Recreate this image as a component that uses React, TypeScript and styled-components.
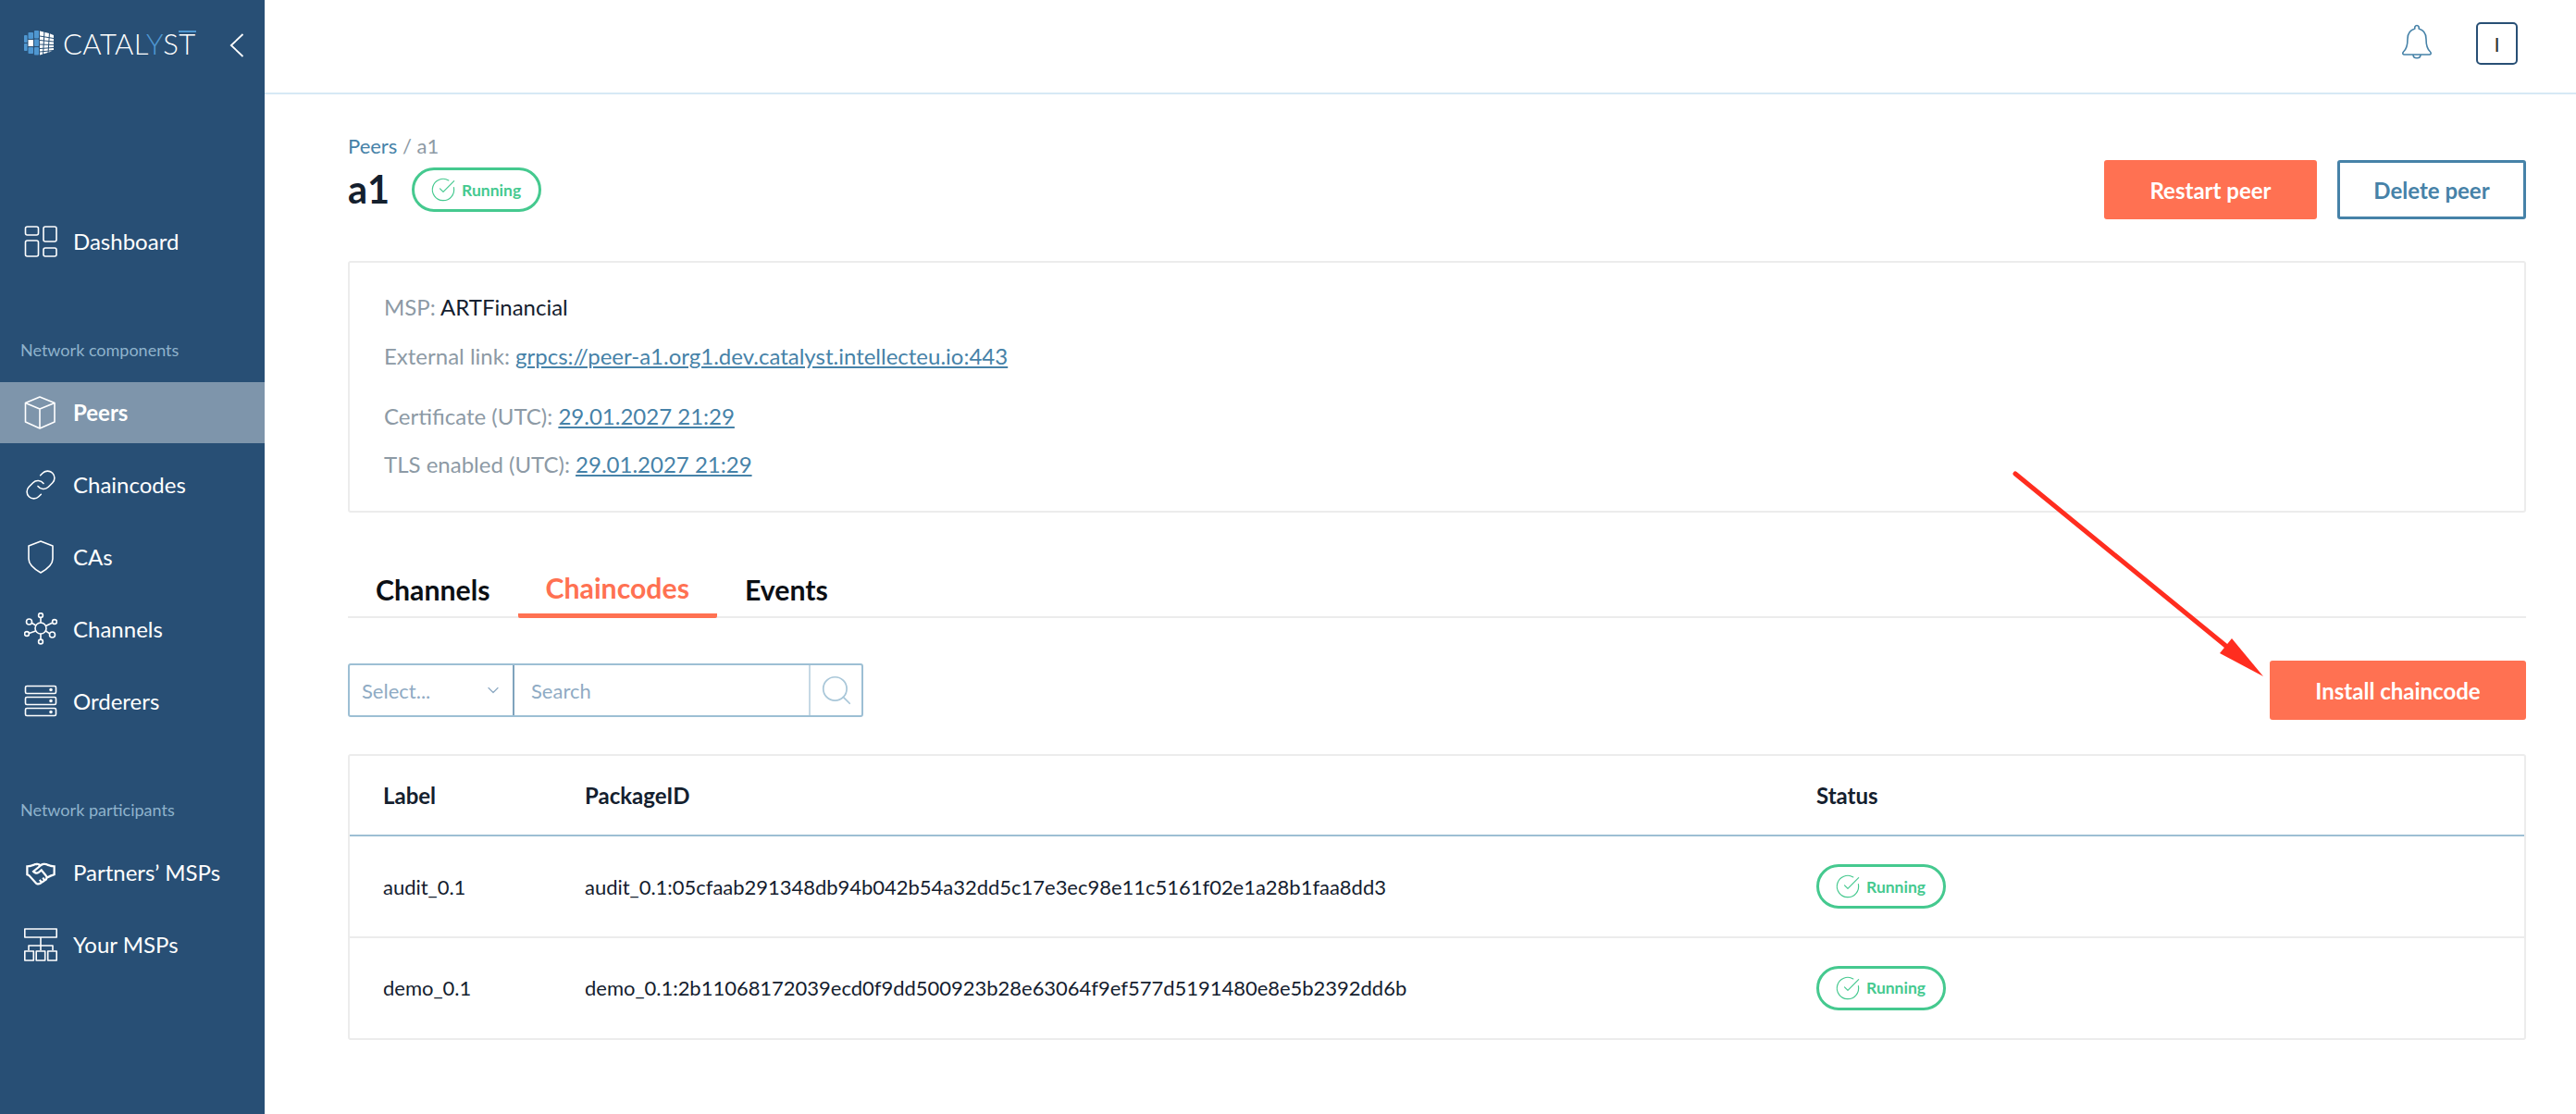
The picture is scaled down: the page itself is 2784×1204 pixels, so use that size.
import React from 'react';
import styled, {createGlobalStyle} from 'styled-components';
import {ChevronDown, CircleCheckBig, Link, Search} from 'lucide-react';
import {LiaHandshake} from 'react-icons/lia';

const GlobalStyle = createGlobalStyle`
  html, body {
    margin: 0;
    padding: 0;
    background: #fff;
  }
  body {
    font-family: 'Lato', 'Liberation Sans', sans-serif;
    color: #14202e;
  }
  * {
    box-sizing: border-box;
  }
`;

const Page = styled.div`
  position: relative;
  display: grid;
  grid-template-columns: 286px 1fr;
  width: 2784px;
  height: 1204px;
  overflow: hidden;
`;

const Sidebar = styled.aside`
  display: flex;
  flex-direction: column;
  background: #284f75;
  color: #fff;
`;

const Brand = styled.div`
  display: flex;
  align-items: flex-start;
  height: 228px;
  padding: 33px 0 0 26px;
`;

const BrandName = styled.span`
  margin-left: 10px;
  font-size: 31px;
  font-weight: 300;
  line-height: 27px;
  letter-spacing: 0.4px;
  white-space: nowrap;

  b {
    font-weight: 300;
    color: #4f97d1;
  }
`;

const BrandLastLetter = styled.span`
  display: inline-block;
  border-top: 2px solid #4f97d1;
  line-height: 25px;
`;

const CollapseButton = styled.span`
  display: flex;
  margin: 3px 0 0 36px;
`;

const NavItem = styled.div<{$active?: boolean}>`
  display: flex;
  align-items: center;
  height: 66px;
  margin-bottom: 12px;
  padding: 0 0 2px 26px;
  font-size: 24px;
  font-weight: ${p => (p.$active ? 700 : 400)};
  background: ${p => (p.$active ? '#7e95ab' : 'transparent')};
`;

const NavIcon = styled.span`
  display: flex;
  align-items: center;
  justify-content: center;
  width: 36px;
  height: 36px;
  margin: 2px 17px 0 0;
`;

const SectionLabel = styled.div`
  margin: 61px 0 24px 22px;
  font-size: 18px;
  line-height: 22px;
  color: #8fb3cc;
`;

const Main = styled.main`
  display: flex;
  flex-direction: column;
`;

const TopBar = styled.header`
  display: flex;
  align-items: flex-start;
  justify-content: flex-end;
  height: 102px;
  padding: 24px 63px 0 0;
  border-bottom: 2px solid #d6e9f5;
`;

const BellWrap = styled.span`
  display: flex;
  margin: 2px 47px 0 0;
`;

const Avatar = styled.span`
  display: flex;
  align-items: center;
  justify-content: center;
  width: 45px;
  height: 46px;
  font-size: 22px;
  color: #333;
  border: 2px solid #284f75;
  border-radius: 5px;
`;

const Content = styled.div`
  display: flex;
  flex-direction: column;
  padding: 41px 54px 0 90px;
`;

const PageHead = styled.div`
  display: flex;
  justify-content: space-between;
  height: 94px;
`;

const Breadcrumb = styled.div`
  font-size: 22px;
  line-height: 30px;
  color: #8d9aa5;

  a {
    color: #4682a8;
  }
`;

const TitleRow = styled.div`
  display: flex;
  align-items: center;
  margin-top: 8px;
`;

const Title = styled.h1`
  margin: -3px 24px 0 0;
  font-size: 41.5px;
  font-weight: 700;
  line-height: 48px;
`;

const Badge = styled.span`
  display: inline-flex;
  align-items: center;
  justify-content: center;
  gap: 6px;
  width: 140px;
  height: 48px;
  padding-right: 2px;
  font-size: 17.5px;
  font-weight: 700;
  color: #45c98f;
  border: 3px solid #45c98f;
  border-radius: 24px;
`;

const HeadActions = styled.div`
  display: flex;
  align-items: flex-end;
  gap: 22px;
`;

const Button = styled.button<{$outline?: boolean; $width: number}>`
  width: ${p => p.$width}px;
  height: 64px;
  padding: 0;
  font-family: inherit;
  font-size: 24px;
  font-weight: 700;
  color: ${p => (p.$outline ? '#4682a8' : '#fff')};
  background: ${p => (p.$outline ? '#fff' : '#ff7152')};
  border: ${p => (p.$outline ? '3px solid #4682a8' : 'none')};
  border-radius: 3px;
`;

const InfoCard = styled.section`
  display: flex;
  flex-direction: column;
  height: 272px;
  margin-top: 45px;
  padding: 31px 36px 31px 37px;
  border: 2px solid #ececec;
  border-radius: 3px;
`;

const InfoLine = styled.div<{$spaced?: boolean}>`
  margin-top: ${p => (p.$spaced ? 31 : 19)}px;
  font-size: 24px;
  line-height: 34px;
  color: #8d9aa5;

  &:first-child {
    margin-top: 0;
  }

  &:last-child {
    margin-top: 18px;
  }

  strong {
    font-weight: 400;
    color: #14202e;
  }

  a {
    color: #4682a8;
    text-decoration: underline;
  }
`;

const Tabs = styled.nav`
  display: flex;
  height: 60px;
  margin-top: 54px;
  border-bottom: 2px solid #ececec;
`;

const Tab = styled.div<{$active?: boolean}>`
  height: 60px;
  padding: ${p => (p.$active ? 7 : 9)}px 30px 0;
  font-size: 30.25px;
  font-weight: 700;
  line-height: 40px;
  color: ${p => (p.$active ? '#ff7152' : '#0b0f14')};
  border-bottom: 5px solid ${p => (p.$active ? '#ff7152' : 'transparent')};
  border-radius: 0 0 2px 2px;
`;

const Toolbar = styled.div`
  display: flex;
  align-items: center;
  justify-content: space-between;
  margin-top: 46px;
`;

const FilterGroup = styled.div`
  display: flex;
  width: 557px;
  height: 58px;
  border: 2px solid #9dbfd4;
  border-radius: 3px;
`;

const SelectBox = styled.div`
  display: flex;
  align-items: center;
  justify-content: space-between;
  width: 178px;
  padding: 0 11px 0 13px;
  font-size: 22px;
  color: #8fabc4;
  border-right: 2px solid #7fa3bd;
`;

const SearchInput = styled.input`
  flex: 1;
  min-width: 0;
  padding: 0 0 0 18px;
  font-family: inherit;
  font-size: 22px;
  background: transparent;
  border: none;
  outline: none;

  &::placeholder {
    color: #8fabc4;
    opacity: 1;
  }
`;

const SearchButton = styled.span`
  display: flex;
  align-items: center;
  justify-content: center;
  width: 57px;
  color: #a9c7d9;
  border-left: 2px solid #c6d9e5;
`;

const Table = styled.div`
  margin-top: 37px;
  border: 2px solid #ececec;
  border-radius: 3px;
`;

const Row = styled.div<{$head?: boolean}>`
  display: grid;
  grid-template-columns: 218px 1331px 1fr;
  align-items: center;
  height: ${p => (p.$head ? 87 : 110)}px;
  padding-left: 36px;
  font-size: ${p => (p.$head ? 24 : 22)}px;
  font-weight: ${p => (p.$head ? 700 : 400)};
  letter-spacing: ${p => (p.$head ? 0 : '-0.02px')};
  border-bottom: 2px solid ${p => (p.$head ? '#9dbfd4' : '#ececec')};

  &:last-child {
    border-bottom: none;
    height: 108px;
    padding-bottom: 1px;
  }
`;

const Arrow = styled.svg`
  position: absolute;
  top: 500px;
  left: 2170px;
  pointer-events: none;
`;

const LogoMark = () => {
  const blue = [
    [0, 5, 3.5, 8], [0, 14, 3.5, 8], [4.5, 2, 5.5, 7], [4.5, 18, 5.5, 7],
    [11, 0, 5, 8.5], [11, 9.5, 5, 7.5], [11, 18, 5, 8.5],
  ];
  const whiteCells = [[4.5, 10, 5.5, 7]];
  return (
    <svg width="32" height="27" viewBox="0 0 32 27">
      {blue.map(([x, y, w, h]) => (
        <rect key={`${x}-${y}`} x={x} y={y} width={w} height={h} rx="0.8" fill="#4f97d1" />
      ))}
      {whiteCells.map(([x, y, w, h]) => (
        <rect key={`${x}-${y}`} x={x} y={y} width={w} height={h} fill="#fff" />
      ))}
      <path d="M17 0.5 L27 3 L32 5 V21 L27 23.5 L17 26.5 Z" fill="#fff" />
      <path
        d="M17 6 L32 8.5 M17 10.5 L32 12 M17 15 L32 15.5 M17 19.5 L32 18.5 M17 23 L32 21.5 M22 0 L20.5 27 M27.5 2 L26 25"
        stroke="#284f75"
        strokeWidth="1"
        fill="none"
      />
    </svg>
  );
};

const iconStroke = {fill: 'none', stroke: '#fff', strokeWidth: 1.6, strokeLinejoin: 'round' as const};

const DashboardIcon = () => (
  <svg width="36" height="36" viewBox="0 0 36 36" {...iconStroke}>
    <rect x="1.5" y="2" width="14" height="9" rx="2" />
    <rect x="21" y="2" width="14" height="16" rx="2" />
    <rect x="1.5" y="17" width="14" height="17" rx="2" />
    <rect x="21" y="25" width="14" height="9" rx="2" />
  </svg>
);

const CubeIcon = () => (
  <svg width="36" height="36" viewBox="0 0 36 36" {...iconStroke}>
    <path d="M17 1 L33 7.5 V28 L17 35 L1.5 28 V7.5 Z" />
    <path d="M1.5 7.5 L17 14 L33 7.5 M17 14 V35" />
  </svg>
);

const ShieldIcon = () => (
  <svg width="36" height="36" viewBox="0 0 36 36" {...iconStroke}>
    <path d="M18 1 L31 6 V20 C31 26 25 31 18 35 C11 31 5 26 5 20 V6 Z" />
  </svg>
);

const HubIcon = () => {
  const nodes = [
    [18, 3, 2.4], [33, 10, 2.4], [30.5, 24, 3], [18, 31.5, 2.4], [3, 23, 2.4], [5.5, 10, 3],
  ];
  return (
    <svg width="36" height="36" viewBox="0 0 36 36" {...iconStroke}>
      <circle cx="18" cy="17" r="6" />
      {nodes.map(([cx, cy, r]) => (
        <circle key={cx} cx={cx} cy={cy} r={r} />
      ))}
      <path d="M18 5.5V11M30.8 11L23.5 14.5M27.8 22.8L23.5 20M18 23V29M5.3 22.4L12.5 20M8.3 11.3L12.8 14" />
    </svg>
  );
};

const ServerIcon = () => (
  <svg width="36" height="36" viewBox="0 0 36 36" {...iconStroke}>
    <rect x="1.5" y="1.5" width="33" height="8" rx="1.5" />
    <rect x="1.5" y="13.5" width="33" height="8" rx="1.5" />
    <rect x="1.5" y="25.5" width="33" height="8" rx="1.5" />
    <circle cx="29" cy="5.5" r="1" fill="#fff" />
    <circle cx="29" cy="17.5" r="1" fill="#fff" />
    <circle cx="29" cy="29.5" r="1" fill="#fff" />
  </svg>
);

const OrgIcon = () => (
  <svg width="36" height="36" viewBox="0 0 36 36" {...iconStroke}>
    <rect x="0.8" y="1" width="34.4" height="9" />
    <path d="M18 10V24M5 24V19H31V24" />
    <rect x="0.8" y="25" width="9.5" height="10" />
    <rect x="13.2" y="25" width="9.5" height="10" />
    <rect x="25.7" y="25" width="9.5" height="10" />
  </svg>
);

const BackIcon = () => (
  <svg width="16" height="26" viewBox="0 0 16 26" fill="none" stroke="#fff" strokeWidth="1.8">
    <path d="M14.5 1 L1.8 13 L14.5 25" />
  </svg>
);

const BellIcon = () => (
  <svg width="34" height="38" viewBox="0 0 34 38" fill="none" stroke="#4682a8" strokeWidth="1.6" strokeLinejoin="round">
    <path d="M17 1.5 C15 1.5 14.6 3.5 14.8 5 C9.5 6.5 7 10.5 7 16 C7 23 6 27 2.5 30 C1 31.5 2 33 3.5 33 H30.5 C32 33 33 31.5 31.5 30 C28 27 27 23 27 16 C27 10.5 24.5 6.5 19.2 5 C19.4 3.5 19 1.5 17 1.5 Z" />
    <path d="M13 33 C13 38 21 38 21 33" />
  </svg>
);

const RunningBadge = () => (
  <Badge>
    <CircleCheckBig size={28} strokeWidth={1} />
    Running
  </Badge>
);

const navMain = [
  {label: 'Peers', icon: <CubeIcon />, active: true},
  {label: 'Chaincodes', icon: <Link size={38} strokeWidth={1.05} />},
  {label: 'CAs', icon: <ShieldIcon />},
  {label: 'Channels', icon: <HubIcon />},
  {label: 'Orderers', icon: <ServerIcon />},
];

const navParticipants = [
  {label: 'Partners’ MSPs', icon: <LiaHandshake size={42} />},
  {label: 'Your MSPs', icon: <OrgIcon />},
];

const rows = [
  {
    label: 'audit_0.1',
    packageId: 'audit_0.1:05cfaab291348db94b042b54a32dd5c17e3ec98e11c5161f02e1a28b1faa8dd3',
  },
  {
    label: 'demo_0.1',
    packageId: 'demo_0.1:2b11068172039ecd0f9dd500923b28e63064f9ef577d5191480e8e5b2392dd6b',
  },
];

const App: React.FC = () => {
  return (
    <Page>
      <GlobalStyle />
      <Sidebar>
        <Brand>
          <LogoMark />
          <BrandName>
            CATAL<b>Y</b>S<BrandLastLetter>T</BrandLastLetter>
          </BrandName>
          <CollapseButton>
            <BackIcon />
          </CollapseButton>
        </Brand>
        <NavItem>
          <NavIcon>
            <DashboardIcon />
          </NavIcon>
          Dashboard
        </NavItem>
        <SectionLabel>Network components</SectionLabel>
        {navMain.map(item => (
          <NavItem key={item.label} $active={item.active}>
            <NavIcon>{item.icon}</NavIcon>
            {item.label}
          </NavItem>
        ))}
        <SectionLabel>Network participants</SectionLabel>
        {navParticipants.map(item => (
          <NavItem key={item.label}>
            <NavIcon>{item.icon}</NavIcon>
            {item.label}
          </NavItem>
        ))}
      </Sidebar>

      <Main>
        <TopBar>
          <BellWrap>
            <BellIcon />
          </BellWrap>
          <Avatar>I</Avatar>
        </TopBar>

        <Content>
          <PageHead>
            <div>
              <Breadcrumb>
                <a>Peers</a> / a1
              </Breadcrumb>
              <TitleRow>
                <Title>a1</Title>
                <RunningBadge />
              </TitleRow>
            </div>
            <HeadActions>
              <Button $width={230}>Restart peer</Button>
              <Button $width={204} $outline>
                Delete peer
              </Button>
            </HeadActions>
          </PageHead>

          <InfoCard>
            <InfoLine>
              MSP: <strong>ARTFinancial</strong>
            </InfoLine>
            <InfoLine>
              External link: <a>grpcs://peer-a1.org1.dev.catalyst.intellecteu.io:443</a>
            </InfoLine>
            <InfoLine $spaced>
              Certificate (UTC): <a>29.01.2027 21:29</a>
            </InfoLine>
            <InfoLine>
              TLS enabled (UTC): <a>29.01.2027 21:29</a>
            </InfoLine>
          </InfoCard>

          <Tabs>
            <Tab>Channels</Tab>
            <Tab $active>Chaincodes</Tab>
            <Tab>Events</Tab>
          </Tabs>

          <Toolbar>
            <FilterGroup>
              <SelectBox>
                Select...
                <ChevronDown size={20} strokeWidth={1.5} />
              </SelectBox>
              <SearchInput placeholder="Search" />
              <SearchButton>
                <Search size={38} strokeWidth={1.1} />
              </SearchButton>
            </FilterGroup>
            <Button $width={277}>Install chaincode</Button>
          </Toolbar>

          <Table>
            <Row $head>
              <span>Label</span>
              <span>PackageID</span>
              <span>Status</span>
            </Row>
            {rows.map(row => (
              <Row key={row.label}>
                <span>{row.label}</span>
                <span>{row.packageId}</span>
                <span>
                  <RunningBadge />
                </span>
              </Row>
            ))}
          </Table>
        </Content>
      </Main>

      <Arrow width="290" height="240" viewBox="2170 500 290 240">
        <path d="M2178 512 L2408 700" stroke="#ff2d1f" strokeWidth="5" strokeLinecap="round" />
        <polygon points="2446,731 2412,690 2399,706" fill="#ff2d1f" />
      </Arrow>
    </Page>
  );
};

export default App;
